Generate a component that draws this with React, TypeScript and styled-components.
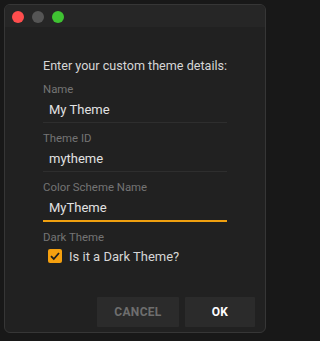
import { useState } from "react";
import styled, { createGlobalStyle } from "styled-components";

const GlobalStyle = createGlobalStyle`
  html, body {
    margin: 0;
    padding: 0;
    background: #181818;
    font-family: Roboto, "Liberation Sans", sans-serif;
  }
`;

const Page = styled.div`
  padding: 4px 6px 8px 4px;
`;

const Window = styled.div`
  width: 262px;
  height: 329px;
  box-sizing: border-box;
  background: #212121;
  border: 1px solid #363636;
  border-radius: 6px;
  overflow: hidden;
  display: flex;
  flex-direction: column;
`;

const TitleBar = styled.div`
  height: 21px;
  background: #262626;
  display: flex;
  align-items: center;
  gap: 8px;
  padding: 1px 0 0 7px;
`;

const Light = styled.span<{ $color: string }>`
  width: 12px;
  height: 12px;
  border-radius: 50%;
  background: ${(p) => p.$color};
`;

const Body = styled.div`
  flex: 1;
  display: flex;
  flex-direction: column;
  padding: 31px 38px 0 38px;
`;

const Heading = styled.div`
  font-size: 12.6px;
  line-height: 16px;
  color: #d6d6d6;
  white-space: nowrap;
  margin-bottom: 8px;
`;

const Field = styled.div`
  display: flex;
  flex-direction: column;
  margin-bottom: 8px;
`;

const Label = styled.div`
  font-size: 11.4px;
  line-height: 14px;
  color: #747474;
`;

const Input = styled.input<{ $focused?: boolean }>`
  height: 26px;
  box-sizing: content-box;
  padding: 0 6px;
  margin: 0;
  border: none;
  border-bottom: ${(p) => (p.$focused ? "2px solid #f0a010" : "1px solid #2e2e2e")};
  background: transparent;
  color: #e2e2e2;
  font-family: Roboto, "Liberation Sans", sans-serif;
  font-size: 13px;
  outline: none;
`;

const CheckRow = styled.label`
  display: flex;
  align-items: center;
  gap: 7px;
  height: 16px;
  margin-top: 4px;
  padding-left: 5px;
  font-size: 13px;
  color: #d6d6d6;
  cursor: pointer;
`;

const Box = styled.span<{ $checked: boolean }>`
  width: 14px;
  height: 14px;
  border-radius: 2px;
  background: ${(p) => (p.$checked ? "#f5a00f" : "transparent")};
  border: ${(p) => (p.$checked ? "none" : "2px solid #777")};
  display: flex;
  align-items: center;
  justify-content: center;
`;

const Actions = styled.div`
  margin-top: auto;
  display: flex;
  justify-content: flex-end;
  gap: 6px;
  padding: 0 10px 5px 0;
`;

const Button = styled.button<{ $primary?: boolean; $width: number }>`
  width: ${(p) => p.$width}px;
  height: 30px;
  border: none;
  border-radius: 1px;
  background: #2b2b2b;
  color: ${(p) => (p.$primary ? "#ffffff" : "#6e6e6e")};
  font-family: Roboto, "Liberation Sans", sans-serif;
  font-weight: 700;
  font-size: 12px;
  letter-spacing: 0.3px;
  cursor: pointer;
`;

export default function App() {
  const [name, setName] = useState("My Theme");
  const [id, setId] = useState("mytheme");
  const [scheme, setScheme] = useState("MyTheme");
  const [dark, setDark] = useState(true);

  return (
    <>
      <GlobalStyle />
      <Page>
        <Window>
          <TitleBar>
            <Light $color="#fe4d4d" />
            <Light $color="#555555" />
            <Light $color="#3fc232" />
          </TitleBar>
          <Body>
            <Heading>Enter your custom theme details:</Heading>
            <Field>
              <Label>Name</Label>
              <Input value={name} onChange={(e) => setName(e.target.value)} />
            </Field>
            <Field>
              <Label>Theme ID</Label>
              <Input value={id} onChange={(e) => setId(e.target.value)} />
            </Field>
            <Field>
              <Label>Color Scheme Name</Label>
              <Input $focused value={scheme} onChange={(e) => setScheme(e.target.value)} />
            </Field>
            <Field>
              <Label>Dark Theme</Label>
              <CheckRow onClick={() => setDark(!dark)}>
                <Box $checked={dark}>
                  {dark && (
                    <svg width="12" height="12" viewBox="0 0 12 12">
                      <path d="M2 6.2 L4.8 9 L10 3" fill="none" stroke="#1e1e1e" strokeWidth="1.8" />
                    </svg>
                  )}
                </Box>
                Is it a Dark Theme?
              </CheckRow>
            </Field>
          </Body>
          <Actions>
            <Button $width={82}>CANCEL</Button>
            <Button $width={70} $primary>
              OK
            </Button>
          </Actions>
        </Window>
      </Page>
    </>
  );
}
